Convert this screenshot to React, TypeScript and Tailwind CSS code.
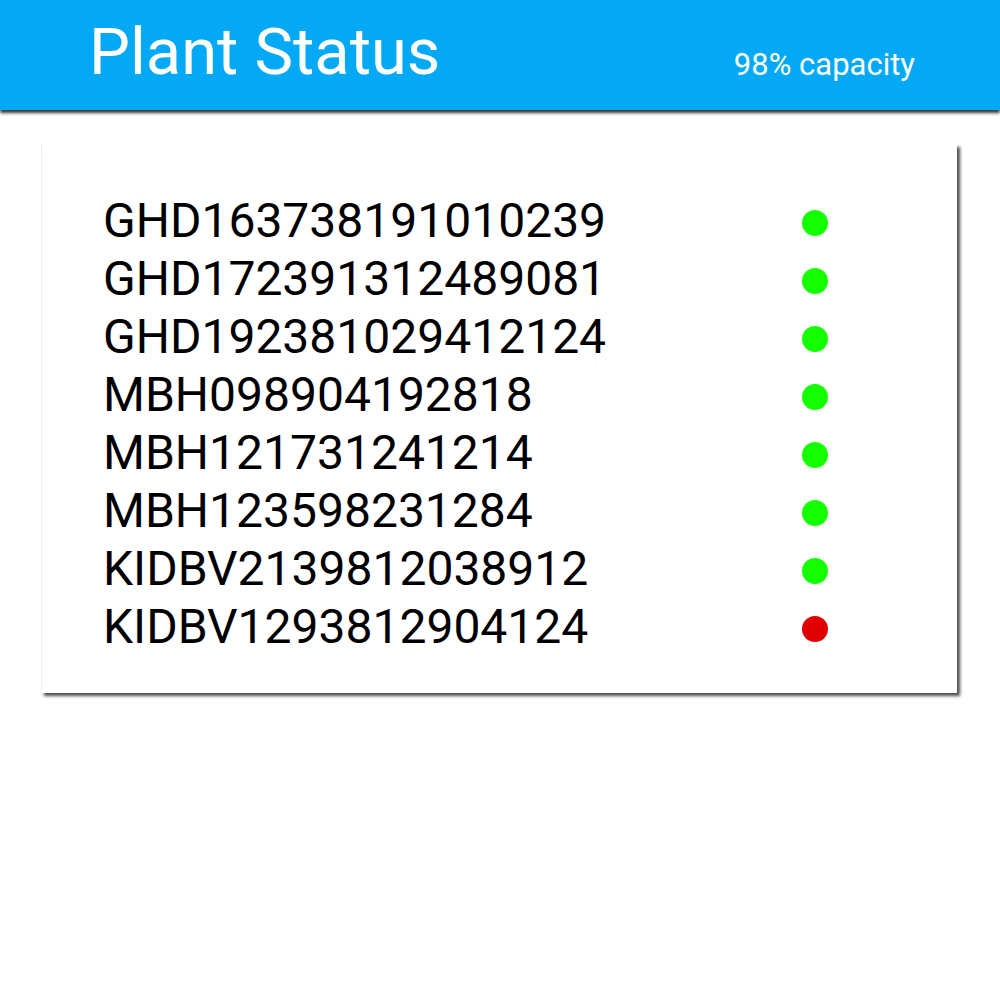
const plants = [
  { id: 'GHD163738191010239', ok: true },
  { id: 'GHD172391312489081', ok: true },
  { id: 'GHD192381029412124', ok: true },
  { id: 'MBH098904192818', ok: true },
  { id: 'MBH121731241214', ok: true },
  { id: 'MBH123598231284', ok: true },
  { id: 'KIDBV2139812038912', ok: true },
  { id: 'KIDBV1293812904124', ok: false },
];

export default function App() {
  return (
    <div className="min-h-screen bg-white font-['Roboto',sans-serif]">
      {/* Header */}
      <header className="h-[110px] bg-[#03a9f4] flex items-center justify-between pl-[89px] pr-[85px] shadow-[0_3px_3px_rgba(0,0,0,0.8)]">
        <h1 className="text-[65px] leading-none text-white -mt-[6px]">Plant Status</h1>
        <span className="text-[31px] leading-none text-white mt-[18px]">98% capacity</span>
      </header>

      {/* Card */}
      <div className="ml-[41px] mt-[34px] w-[916px] bg-white border-l border-[#f0f0f0] shadow-[3px_3px_3px_rgba(0,0,0,0.7)] pl-[61px] pr-[129px] pt-[48px] pb-[37px]">
        <ul>
          {plants.map((p) => (
            <li key={p.id} className="flex items-center justify-between h-[58px]">
              <span className="text-[48px] leading-none text-black">{p.id}</span>
              <span
                className={
                  p.ok
                    ? 'mt-[4px] w-[26px] h-[26px] rounded-full bg-[#14ff00]'
                    : 'mt-[4px] w-[26px] h-[26px] rounded-full bg-[#e00000]'
                }
              />
            </li>
          ))}
        </ul>
      </div>
    </div>
  );
}
